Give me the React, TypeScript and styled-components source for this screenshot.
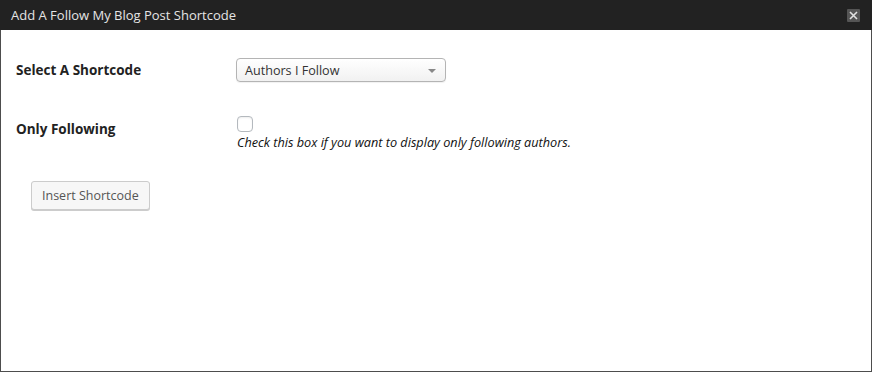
import { FC, useState } from "react";
import styled, { createGlobalStyle } from "styled-components";

const GlobalStyle = createGlobalStyle`
	html, body {
		margin: 0;
		padding: 0;
		background: #fff;
	}
	body {
		font-family: "Open Sans", "DejaVu Sans", sans-serif;
	}
`;

const Dialog = styled.div`
	width: 872px;
	height: 372px;
	box-sizing: border-box;
	display: flex;
	flex-direction: column;
	border: 1px solid #4d4d4d;
	border-top: none;
	background: #fff;
`;

const TitleBar = styled.div`
	height: 30px;
	margin: 0 -1px;
	flex-shrink: 0;
	display: flex;
	align-items: center;
	justify-content: space-between;
	padding: 0 12px 0 11px;
	background: #222;
	color: #e5e5e5;
	font-size: 13px;
`;

const CloseButton = styled.button`
	width: 13px;
	height: 13px;
	padding: 0;
	border: none;
	border-radius: 1px;
	background: #555;
	display: flex;
	align-items: center;
	justify-content: center;
	cursor: pointer;
`;

const Body = styled.div`
	padding: 28px 0 0 15px;
	display: flex;
	flex-direction: column;
`;

const Row = styled.div<{ $top?: boolean }>`
	display: flex;
	align-items: ${props => (props.$top ? "flex-start" : "center")};
	margin-bottom: ${props => (props.$top ? "30px" : "34px")};
`;

const Label = styled.label<{ $top?: boolean }>`
	width: 220px;
	font-size: 13.5px;
	font-weight: 700;
	color: #222;
	line-height: 24px;
	padding-top: ${props => (props.$top ? "1px" : "0")};
`;

const Field = styled.div`
	display: flex;
	flex-direction: column;
	align-items: flex-start;
`;

const Select = styled.div`
	width: 210px;
	height: 24px;
	box-sizing: border-box;
	display: flex;
	align-items: center;
	justify-content: space-between;
	padding: 0 9px 0 8px;
	border: 1px solid #b4b4b4;
	border-radius: 4px;
	background: linear-gradient(#fff, #f1f1f1);
	box-shadow: 0 1px 1px rgba(0, 0, 0, 0.06);
	font-size: 12.6px;
	color: #333;
	cursor: pointer;
`;

const Arrow = styled.span`
	width: 0;
	height: 0;
	margin-top: 2px;
	border-left: 4px solid transparent;
	border-right: 4px solid transparent;
	border-top: 4px solid #888;
`;

const Checkbox = styled.span<{ $checked: boolean }>`
	width: 16px;
	height: 16px;
	box-sizing: border-box;
	margin-left: 1px;
	border: 1px solid #b4b9be;
	border-radius: 4px;
	background: #fff;
	box-shadow: inset 0 1px 2px rgba(0, 0, 0, 0.07);
	cursor: pointer;
	color: #1e8cbe;
	font-size: 12px;
	line-height: 14px;
	text-align: center;
`;

const Hint = styled.p`
	margin: 1px 0 0 1px;
	font-size: 12.7px;
	font-style: italic;
	color: #111;
	line-height: 18px;
`;

const InsertButton = styled.button`
	margin-left: 15px;
	height: 29px;
	padding: 0 10px;
	border: 1px solid #ccc;
	border-radius: 3px;
	background: #f7f7f7;
	box-shadow: 0 1px 0 #ccc;
	font-family: inherit;
	font-size: 12.5px;
	color: #555;
	align-self: flex-start;
	cursor: pointer;
`;

const App: FC = () => {
	const [checked, setChecked] = useState(false);

	return (
		<>
			<GlobalStyle />
			<Dialog>
				<TitleBar>
					<span>Add A Follow My Blog Post Shortcode</span>
					<CloseButton aria-label="Close">
						<svg width="9" height="9" viewBox="0 0 9 9">
							<path d="M1 1 L8 8 M8 1 L1 8" stroke="#e0e0e0" strokeWidth="1.6" />
						</svg>
					</CloseButton>
				</TitleBar>
				<Body>
					<Row>
						<Label>Select A Shortcode</Label>
						<Select>
							<span>Authors I Follow</span>
							<Arrow />
						</Select>
					</Row>
					<Row $top>
						<Label $top>Only Following</Label>
						<Field>
							<Checkbox $checked={checked} onClick={() => setChecked(prev => !prev)}>
								{checked ? "✓" : ""}
							</Checkbox>
							<Hint>Check this box if you want to display only following authors.</Hint>
						</Field>
					</Row>
					<InsertButton>Insert Shortcode</InsertButton>
				</Body>
			</Dialog>
		</>
	);
};

export default App;
